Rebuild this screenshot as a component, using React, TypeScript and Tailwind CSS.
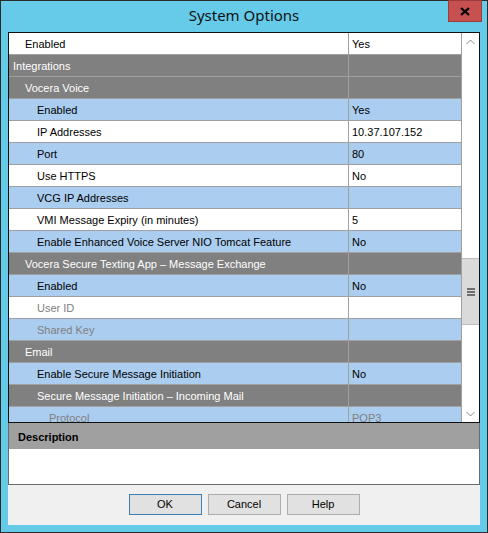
import React from 'react'

type Row = {
  name: string
  value?: string
  level: number
  kind: 'white' | 'blue' | 'cat'
  dim?: boolean
}

const rows: Row[] = [
  { name: 'Enabled', value: 'Yes', level: 1, kind: 'white' },
  { name: 'Integrations', level: 0, kind: 'cat' },
  { name: 'Vocera Voice', level: 1, kind: 'cat' },
  { name: 'Enabled', value: 'Yes', level: 2, kind: 'blue' },
  { name: 'IP Addresses', value: '10.37.107.152', level: 2, kind: 'white' },
  { name: 'Port', value: '80', level: 2, kind: 'blue' },
  { name: 'Use HTTPS', value: 'No', level: 2, kind: 'white' },
  { name: 'VCG IP Addresses', value: '', level: 2, kind: 'blue' },
  { name: 'VMI Message Expiry (in minutes)', value: '5', level: 2, kind: 'white' },
  { name: 'Enable Enhanced Voice Server NIO Tomcat Feature', value: 'No', level: 2, kind: 'blue' },
  { name: 'Vocera Secure Texting App – Message Exchange', level: 1, kind: 'cat' },
  { name: 'Enabled', value: 'No', level: 2, kind: 'blue' },
  { name: 'User ID', value: '', level: 2, kind: 'white', dim: true },
  { name: 'Shared Key', value: '', level: 2, kind: 'blue', dim: true },
  { name: 'Email', level: 1, kind: 'cat' },
  { name: 'Enable Secure Message Initiation', value: 'No', level: 2, kind: 'blue' },
  { name: 'Secure Message Initiation – Incoming Mail', level: 2, kind: 'cat' },
  { name: 'Protocol', value: 'POP3', level: 3, kind: 'blue', dim: true },
]

const indent = ['pl-[4px]', 'pl-[16px]', 'pl-[28px]', 'pl-[40px]']

function GridRow({ row }: { row: Row }) {
  const bg = row.kind === 'cat' ? 'bg-[#808080]' : row.kind === 'blue' ? 'bg-[#abcdef]' : 'bg-white'
  const color = row.kind === 'cat' ? 'text-white' : row.dim ? 'text-[#808080]' : 'text-black'
  return (
    <div className={`flex h-[22px] shrink-0 border-b border-[#a0a0a0] ${bg}`}>
      <div className={`w-[340px] shrink-0 border-r border-[#a0a0a0] flex items-center pt-[2px] whitespace-nowrap overflow-hidden ${indent[row.level]} ${color}`}>
        {row.name}
      </div>
      <div className={`w-[113px] shrink-0 border-r border-[#a0a0a0] flex items-center pt-[2px] pl-[3px] whitespace-nowrap overflow-hidden ${color}`}>
        {row.value}
      </div>
    </div>
  )
}

function Scrollbar() {
  return (
    <div className="w-[17px] shrink-0 flex flex-col bg-white">
      <div className="h-[17px] shrink-0 flex items-center justify-center">
        <svg width="9" height="6" viewBox="0 0 9 6"><path d="M0.5 5 L4.5 1 L8.5 5" fill="none" stroke="#8a8a8a" strokeWidth="1" /></svg>
      </div>
      <div className="flex-1 flex flex-col">
        <div className="mt-[208px] h-[67px] bg-[#dadada] border-y border-[#bdbdbd] flex items-center justify-center">
          <div className="flex flex-col gap-[1px]">
            <div className="w-[8px] h-[2px] bg-[#6e6e6e]" />
            <div className="w-[8px] h-[2px] bg-[#6e6e6e]" />
            <div className="w-[8px] h-[2px] bg-[#6e6e6e]" />
          </div>
        </div>
      </div>
      <div className="h-[17px] shrink-0 flex items-center justify-center">
        <svg width="9" height="6" viewBox="0 0 9 6"><path d="M0.5 1 L4.5 5 L8.5 1" fill="none" stroke="#8a8a8a" strokeWidth="1" /></svg>
      </div>
    </div>
  )
}

function Btn({ label, def }: { label: string; def?: boolean }) {
  return (
    <button className={`w-[73px] h-[21px] bg-[#e1e1e1] border ${def ? 'border-[#3c7fb1]' : 'border-[#adadad]'} text-[11px] text-black flex items-center justify-center`}>
      {label}
    </button>
  )
}

export default function App() {
  return (
    <div className="w-[488px] h-[533px] border border-[#2b2b2b] bg-[#65cbe9] flex flex-col text-[11px] leading-none" style={{ fontFamily: '"Liberation Sans", Arial, sans-serif' }}>
      <div className="relative h-[31px] shrink-0 flex items-center justify-center">
        <span className="text-[15px] text-[#111] mb-[2px]" style={{ fontFamily: '"Noto Sans", "Open Sans", sans-serif' }}>System Options</span>
        <div className="absolute right-[5px] top-[-1px] w-[34px] h-[22px] bg-[#c75050] border border-[#9a3c3c] flex items-center justify-center">
          <svg width="10" height="9" viewBox="0 0 10 9"><path d="M1 1 L9 8 M9 1 L1 8" stroke="#000" strokeWidth="2.2" /></svg>
        </div>
      </div>
      <div className="mx-[7px] h-[493px] flex flex-col">
        <div className="h-[391px] shrink-0 border border-[#101010] flex bg-white">
          <div className="w-[453px] shrink-0 flex flex-col overflow-hidden">
            {rows.map((r, i) => (
              <GridRow key={i} row={r} />
            ))}
          </div>
          <Scrollbar />
        </div>
        <div className="h-[62px] shrink-0 border-x border-b border-[#6b6b6b] flex flex-col">
          <div className="h-[26px] shrink-0 bg-[#a0a0a0] flex items-center pt-[2px] pl-[9px] font-bold text-[11px] text-black">Description</div>
          <div className="flex-1 bg-white" />
        </div>
        <div className="flex-1 bg-[#f0f0f0] flex justify-center gap-[6px] pt-[9px]">
          <Btn label="OK" def />
          <Btn label="Cancel" />
          <Btn label="Help" />
        </div>
      </div>
    </div>
  )
}
